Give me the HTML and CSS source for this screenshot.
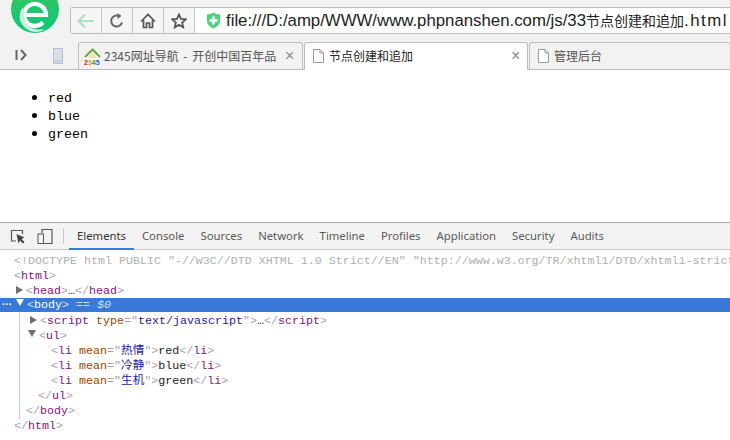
FILE: index.html
```html
<!DOCTYPE html>
<html lang="zh">
<head>
<meta charset="utf-8">
<title>节点创建和追加</title>
<link rel="stylesheet" href="styles.css">
</head>
<body>
<header class="chrome">
  <div class="top">
    <svg class="logo" width="60" height="33" viewBox="0 0 60 33">
      <defs><linearGradient id="lg" x1="0" y1="0" x2="0" y2="1"><stop offset="0" stop-color="#3cc75a"/><stop offset="1" stop-color="#0cc47c"/></linearGradient></defs>
      <circle cx="35" cy="9" r="24" fill="url(#lg)"/>
      <path d="M26 15H46A11 11 0 1 0 43 22.500" fill="none" stroke="#fff" stroke-width="4.200"/>
      <path d="M23 7C17 15 19 26 30 31 36 33 41 32 45 29 37 31 27 28 25 20 24 15 24 11 23 7Z" fill="#c6f0da"/>
    </svg>
    <div class="omnibox">
      <button class="tool"><svg width="18" height="16" viewBox="0 0 18 16"><path d="M8 1.500 1.500 8 8 14.500M2 8h15" fill="none" stroke="#a9e0c6" stroke-width="2"/></svg></button>
      <button class="tool"><svg width="16" height="16" viewBox="0 0 16 16"><path d="M13 9.500A5.500 5.500 0 1 1 10 3" fill="none" stroke="#666" stroke-width="2"/><path d="M8.500 0v6l4-3Z" fill="#666"/></svg></button>
      <button class="tool"><svg width="16" height="16" viewBox="0 0 16 16"><path d="M1 8.500 8 1.500l7 7M3.500 7v7.500h3V10h3v4.500h3V7" fill="none" stroke="#555" stroke-width="1.700"/></svg></button>
      <button class="tool"><svg width="16" height="16" viewBox="0 0 16 16"><path d="m8 1.500 2 4.400 4.800.5-3.600 3.200 1 4.700L8 11.900l-4.200 2.400 1-4.700-3.600-3.200L6 5.900Z" fill="none" stroke="#555" stroke-width="1.800"/></svg></button>
      <div class="address">
        <svg width="15" height="17" viewBox="0 0 15 17"><path d="M1 2.500Q5 2.500 7.500 0.500 10 2.500 14 2.500V9Q14 14 7.500 16.500 1 14 1 9Z" fill="#4fd07f"/><path d="M6.300 4.500h2.400v2.800h2.800v2.400H8.700v2.800H6.300V9.700H3.500V7.300h2.800Z" fill="#fff"/></svg>
        <span class="url">file:///D:/amp/WWW/www.phpnanshen.com/js/33<span class="url-cjk">节点创建和追加</span><span class="url-ext">.html</span></span>
      </div>
    </div>
  </div>
  <div class="tabstrip">
    <svg class="side" width="12" height="12" viewBox="0 0 12 12"><path d="M1.500 1v10" stroke="#666" stroke-width="2"/><path d="m6 1 4.500 5L6 11" fill="none" stroke="#666" stroke-width="2"/></svg>
    <svg class="phone" width="10" height="16" viewBox="0 0 10 16"><rect x="0.500" y="0.500" width="9" height="15" fill="#ddd" stroke="#a9c4e4"/><path d="M1 13h8" stroke="#a9c4e4"/></svg>
    <div class="tab first">
      <svg class="favicon" width="17" height="17" viewBox="0 0 17 17"><path d="M1 9 8.500 1.500 16 9" fill="none" stroke="#6aa84f" stroke-width="2"/><path d="M5 8 8.500 5 12 8v2H5Z" fill="#f3e3b0"/><text x="0" y="16.500" class="mini"><tspan fill="#e02020">2</tspan><tspan fill="#e0a020">3</tspan><tspan fill="#30a030">4</tspan><tspan fill="#2060d0">5</tspan></text></svg>
      <span class="tab-title clip">2345网址导航 - 开创中国百年品</span>
      <span class="close">×</span>
    </div>
    <div class="tab active">
      <svg class="doc" width="11" height="14" viewBox="0 0 11 14"><path d="M.5.500h6.500l3.500 3.500v9.500H.5ZM7 .5V4h3.500" fill="#fff" stroke="#999"/></svg>
      <span class="tab-title dark">节点创建和追加</span>
      <span class="close">×</span>
    </div>
    <div class="tab last">
      <svg class="doc" width="11" height="14" viewBox="0 0 11 14"><path d="M.5.500h6.500l3.500 3.500v9.500H.5ZM7 .5V4h3.500" fill="#fff" stroke="#999"/></svg>
      <span class="tab-title">管理后台</span>
    </div>
  </div>
</header>
<main class="page">
  <ul class="list">
    <li>red</li>
    <li>blue</li>
    <li>green</li>
  </ul>
</main>
<section class="devtools">
  <nav class="dt-bar">
    <svg class="dt-icon" width="16" height="16" viewBox="0 0 16 16"><path d="M6 13H1.500V2.500h11V6" fill="none" stroke="#555" stroke-width="1.200"/><path d="m6.500 6 8 3.500-3 1.500 3 3-1.500 1.500-3-3-1.500 3Z" fill="#444"/></svg>
    <svg class="dt-icon" width="16" height="16" viewBox="0 0 16 16"><path d="M5.500 5V1.500h10v14h-10" fill="none" stroke="#555" stroke-width="1.200" transform="translate(-.5 0)"/><rect x="1" y="6" width="5.500" height="9.500" fill="#f3f3f3" stroke="#555"/></svg>
    <span class="dt-sep"></span>
    <span class="dt-tab on">Elements</span>
    <span class="dt-tab">Console</span>
    <span class="dt-tab">Sources</span>
    <span class="dt-tab">Network</span>
    <span class="dt-tab">Timeline</span>
    <span class="dt-tab">Profiles</span>
    <span class="dt-tab">Application</span>
    <span class="dt-tab">Security</span>
    <span class="dt-tab">Audits</span>
  </nav>
  <div class="tree">
    <div class="row l0 gray">&lt;!DOCTYPE html PUBLIC "-//W3C//DTD XHTML 1.0 Strict//EN" "http://www.w3.org/TR/xhtml1/DTD/xhtml1-strict.dtd"&gt;</div>
    <div class="row l0"><i>&lt;</i><b>html</b><i>&gt;</i></div>
    <div class="row l0"><span class="arrow right"></span><i>&lt;</i><b>head</b><i>&gt;</i>…<i>&lt;/</i><b>head</b><i>&gt;</i></div>
    <div class="row l0 selected"><span class="dots">···</span><span class="arrow down white"></span><i>&lt;</i><b>body</b><i>&gt;</i> <em>== $0</em></div>
    <div class="nested">
      <div class="row l1"><span class="arrow right"></span><i>&lt;</i><b>script</b> <u>type</u><i>="</i><s>text/javascript</s><i>"&gt;</i>…<i>&lt;/</i><b>script</b><i>&gt;</i></div>
      <div class="row l1"><span class="arrow down"></span><i>&lt;</i><b>ul</b><i>&gt;</i></div>
      <div class="row l2"><i>&lt;</i><b>li</b> <u>mean</u><i>="</i><s>热情</s><i>"&gt;</i>red<i>&lt;/</i><b>li</b><i>&gt;</i></div>
      <div class="row l2"><i>&lt;</i><b>li</b> <u>mean</u><i>="</i><s>冷静</s><i>"&gt;</i>blue<i>&lt;/</i><b>li</b><i>&gt;</i></div>
      <div class="row l2"><i>&lt;</i><b>li</b> <u>mean</u><i>="</i><s>生机</s><i>"&gt;</i>green<i>&lt;/</i><b>li</b><i>&gt;</i></div>
      <div class="row l3"><i>&lt;/</i><b>ul</b><i>&gt;</i></div>
      <div class="row l4"><i>&lt;/</i><b>body</b><i>&gt;</i></div>
    </div>
    <div class="row l0"><i>&lt;/</i><b>html</b><i>&gt;</i></div>
  </div>
</section>
</body>
</html>
```
FILE: styles.css
```css
html, body { margin: 0; padding: 0; }
body { width: 730px; height: 440px; overflow: hidden; background: #fff; }

.chrome { height: 69px; background: #f2f2f2; border-bottom: 1px solid #b8b8b8; display: flex; flex-direction: column; }
.top { height: 42px; display: flex; align-items: flex-start; }
.logo { display: block; width: 60px; flex: none; }
.omnibox { margin: 7px 0 0 10px; flex: 1; min-width: 0; height: 25px; border: 1px solid #bcbcbc; border-right: 0; border-radius: 3px 0 0 3px; display: flex; background: #fff; }
.tool { flex: none; width: 31px; height: 25px; padding: 0; border: 0; border-right: 1px solid #c8c8c8; background: #f5f5f5; display: flex; align-items: center; justify-content: center; }
.address { flex: 1; min-width: 0; display: flex; align-items: center; padding-left: 11px; gap: 5px; white-space: nowrap; overflow: hidden; }
.url { font: 16.800px/25px "Liberation Sans", "Noto Sans CJK SC", sans-serif; color: #222; }
.url-cjk { font-size: 14px; font-family: "Noto Sans CJK SC", sans-serif; }
.url-ext { letter-spacing: 1.500px; }

.tabstrip { height: 27px; display: flex; align-items: flex-end; }
.side { margin: 0 0 8px 15px; }
.phone { margin: 0 0 5px 26px; }
.tab { box-sizing: border-box; height: 27px; border: 1px solid #bcbcbc; border-bottom: 0; border-radius: 3px 3px 0 0; display: flex; align-items: center; background: #f2f2f2; margin-right: 1px; }
.tab.first { width: 225px; margin-left: 15px; padding-left: 5px; }
.tab.active { width: 224px; background: #fff; height: 28px; margin-bottom: -1px; padding: 0 0 1px 8px; }
.tab.last { flex: 1; margin-right: 0; border-right: 0; padding-left: 8px; }
.favicon { flex: none; }
.mini { font: bold 7px "Liberation Sans", sans-serif; }
.doc { flex: none; }
.tab-title { font: 12px/16px "Noto Sans CJK SC", sans-serif; color: #555; margin-left: 5px; white-space: nowrap; }
.tab-title.clip { width: 175px; overflow: hidden; margin-left: 3px; word-spacing: 2px; }
.tab-title.dark { color: #222; width: 182px; }
.close { font: 16px/16px "Liberation Sans", sans-serif; color: #888; margin-left: 6px; }
.tab.active .close { margin-left: 0; }

.page { height: 152px; overflow: hidden; }
.list { margin: 0; padding: 19px 0 0 48px; font: 13.330px/18px "Liberation Mono", monospace; color: #000; }
.list li { height: 18px; }
.list li::marker { font-size: 17px; }

.devtools { height: 218px; border-top: 1px solid #b0b0b0; }
.dt-bar { height: 26px; background: #f3f3f3; border-bottom: 1px solid #ccc; display: flex; align-items: center; padding-left: 10px; }
.dt-icon { flex: none; margin-right: 11px; }
.dt-icon + .dt-icon { margin-right: 10px; }
.dt-sep { width: 1px; height: 16px; background: #ccc; margin-right: 5px; }
.dt-tab { font: 11.300px/26px "Noto Sans", sans-serif; color: #5a5a5a; padding: 0 8px; height: 26px; box-sizing: border-box; }
.dt-tab.on { color: #333; border-bottom: 2px solid #3879d9; height: 27px; margin-bottom: -1px; }

.tree { font: 11.670px/15px "Liberation Mono", "Noto Sans CJK SC", monospace; color: #222; white-space: nowrap; overflow: hidden; padding-top: 4px; }
.row { height: 15px; }
.tree i { font-style: normal; color: #a8a0b0; }
.tree b { font-weight: normal; color: #881280; }
.tree u { text-decoration: none; color: #994500; }
.tree s { text-decoration: none; color: #1a1aa6; }
.gray { color: #b0b0b0; }
.l0 { padding-left: 14px; }
.l1 { padding-left: 27px; }
.l2 { padding-left: 50px; }
.l3 { padding-left: 38px; }
.l4 { padding-left: 26px; }
.arrow { display: inline-block; width: 0; height: 0; }
.arrow.right { border-left: 7px solid #6e6e6e; border-top: 4px solid transparent; border-bottom: 4px solid transparent; margin: 0 3px 0 2px; }
.arrow.down { border-top: 7px solid #6e6e6e; border-left: 4px solid transparent; border-right: 4px solid transparent; margin: 0 3px 1px 0; vertical-align: 1px; }
.arrow.white { border-top-color: #fff; margin-left: 4px; }
.selected { background: #3879d9; height: 14px; line-height: 14px; padding-left: 2px; margin-top: -1px; margin-bottom: 2px; color: #fff; }
.selected i { color: #d5e3f7; }
.selected b { color: #fff; }
.selected em { color: #cfe0f8; font-style: italic; }
.dots { color: #fff; font: bold 10px/14px "Liberation Sans", sans-serif; }
.nested { margin: -2px 0 0 19px; padding-top: 2px; border-left: 1px solid #bcd0ef; }
.nested .l1 { padding-left: 8px; }
.nested .l2 { padding-left: 31px; }
.nested .l3 { padding-left: 18px; }
.nested .l4 { padding-left: 6px; }
```
